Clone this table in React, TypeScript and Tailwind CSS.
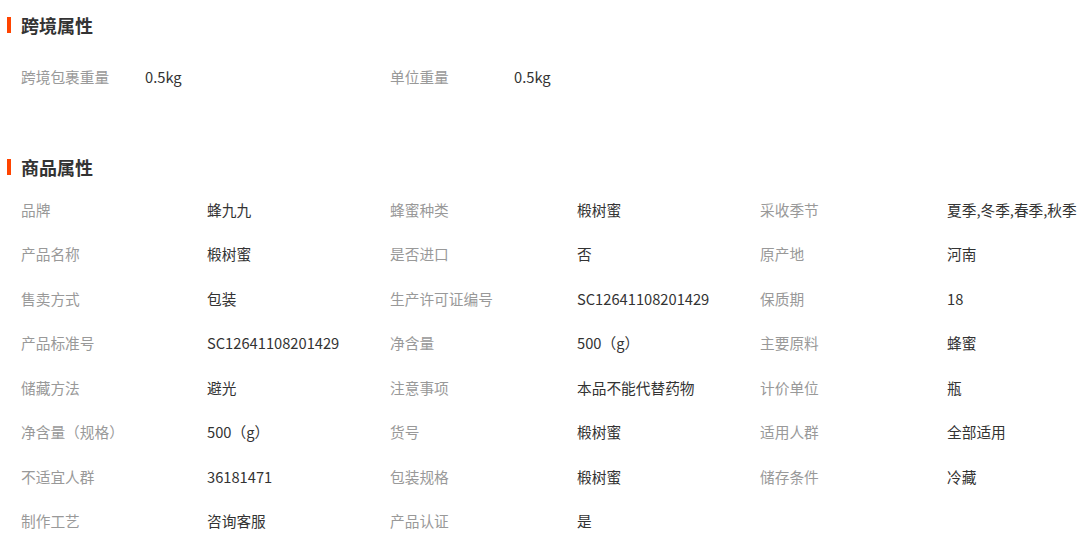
const crossBorder = [
  ["跨境包裹重量", "0.5kg"],
  ["单位重量", "0.5kg"],
];

const attrs = [
  ["品牌", "蜂九九"],
  ["蜂蜜种类", "椴树蜜"],
  ["采收季节", "夏季,冬季,春季,秋季"],
  ["产品名称", "椴树蜜"],
  ["是否进口", "否"],
  ["原产地", "河南"],
  ["售卖方式", "包装"],
  ["生产许可证编号", "SC12641108201429"],
  ["保质期", "18"],
  ["产品标准号", "SC12641108201429"],
  ["净含量", "500（g）"],
  ["主要原料", "蜂蜜"],
  ["储藏方法", "避光"],
  ["注意事项", "本品不能代替药物"],
  ["计价单位", "瓶"],
  ["净含量（规格）", "500（g）"],
  ["货号", "椴树蜜"],
  ["适用人群", "全部适用"],
  ["不适宜人群", "36181471"],
  ["包装规格", "椴树蜜"],
  ["储存条件", "冷藏"],
  ["制作工艺", "咨询客服"],
  ["产品认证", "是"],
];

function Title({ text }: { text: string }) {
  return (
    <div className="flex h-[18px] items-center">
      <span className="ml-[7px] h-[16px] w-[4px] bg-[#ff4400]" />
      <h3 className="ml-[10px] text-[18px] leading-[18px] font-bold text-[#333]">
        {text}
      </h3>
    </div>
  );
}

export default function App() {
  return (
    <div
      className="w-[1082px] overflow-hidden bg-white pt-[16px] text-[14.7px]"
      style={{ fontFamily: '"Noto Sans CJK SC", "Noto Sans", sans-serif' }}
    >
      <Title text="跨境属性" />

      <div className="mt-[21px] grid grid-cols-[124px_245px_124px_1fr] pl-[21px]">
        {crossBorder.map(([k, v]) => (
          <>
            <div key={k} className="flex h-[44.5px] items-center text-[#999]">
              {k}
            </div>
            <div key={k + "v"} className="flex h-[44.5px] items-center text-[#333]">
              {v}
            </div>
          </>
        ))}
      </div>

      <div className="mt-[58px]">
        <Title text="商品属性" />
      </div>

      <div className="mt-[12px] grid grid-cols-[186px_183px_187px_183px_187px_1fr] pl-[21px]">
        {attrs.map(([k, v], i) => (
          <>
            <div key={"k" + i} className="flex h-[44.5px] items-center text-[#999]">
              {k}
            </div>
            <div
              key={"v" + i}
              className="flex h-[44.5px] items-center whitespace-nowrap text-[#333]"
            >
              {v}
            </div>
          </>
        ))}
      </div>
    </div>
  );
}
